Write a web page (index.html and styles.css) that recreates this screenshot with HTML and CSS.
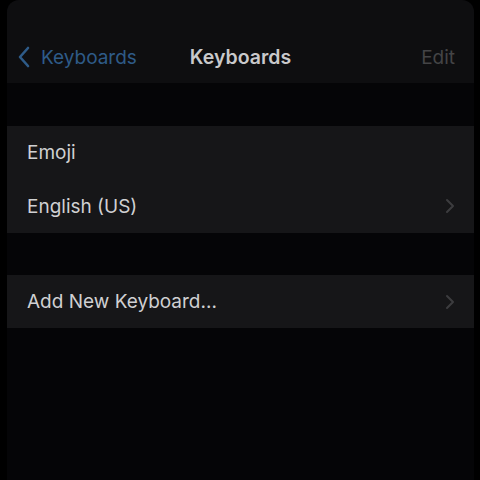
FILE: index.html
```html
<!DOCTYPE html>
<html>
<head>
<meta charset="utf-8">
<link rel="stylesheet" href="styles.css">
</head>
<body>
<div class="screen">
  <header class="nav">
    <div class="bar">
      <div class="back">
        <svg class="back-chev" width="14" height="22" viewBox="0 0 14 22"><path d="M11 2 L3 11 L11 20" fill="none" stroke="currentColor" stroke-width="2.6" stroke-linecap="round" stroke-linejoin="round"/></svg>
        <span>Keyboards</span>
      </div>
      <div class="title">Keyboards</div>
      <div class="edit">Edit</div>
    </div>
  </header>
  <section class="group first">
    <div class="row"><span>Emoji</span></div>
    <div class="row"><span>English (US)</span><svg class="chev" width="10" height="16" viewBox="0 0 10 16"><path d="M2 2 L8 8 L2 14" fill="none" stroke="currentColor" stroke-width="2" stroke-linecap="round" stroke-linejoin="round"/></svg></div>
  </section>
  <section class="group second">
    <div class="row"><span>Add New Keyboard...</span><svg class="chev" width="10" height="16" viewBox="0 0 10 16"><path d="M2 2 L8 8 L2 14" fill="none" stroke="currentColor" stroke-width="2" stroke-linecap="round" stroke-linejoin="round"/></svg></div>
  </section>
</div>
</body>
</html>
```
FILE: styles.css
```css
html, body {
  margin: 0;
  padding: 0;
  background: #000;
  height: 480px;
  overflow: hidden;
}
body {
  font-family: "Inter", "Liberation Sans", sans-serif;
}
.screen {
  margin-left: 7px;
  width: 467px;
  height: 480px;
  background: #050507;
  border-top-left-radius: 12px;
  border-top-right-radius: 12px;
  overflow: hidden;
}
.nav {
  background: #0e0e10;
  height: 83px;
  box-sizing: border-box;
  padding-top: 35px;
}
.bar {
  height: 44px;
  display: flex;
  align-items: center;
  justify-content: space-between;
  padding: 0 19px 0 10px;
  position: relative;
}
.back {
  display: flex;
  align-items: center;
  gap: 10px;
  color: #2e5b88;
  font-size: 19px;
}
.back-chev {
  display: block;
}
.title {
  position: absolute;
  left: 0;
  right: 0;
  text-align: center;
  color: #c9c9cb;
  font-size: 19.5px;
  font-weight: 600;
  pointer-events: none;
}
.edit {
  color: #444446;
  font-size: 19px;
}
.group {
  background: #161618;
}
.group.first {
  margin-top: 43px;
}
.group.second {
  margin-top: 42px;
}
.row {
  height: 53.5px;
  display: flex;
  align-items: center;
  justify-content: space-between;
  padding: 0 19px 0 20px;
  color: #d0d0d2;
  font-size: 19px;
}
.second .row {
  height: 53px;
}
.chev {
  color: #3c3c3f;
  display: block;
}
```
